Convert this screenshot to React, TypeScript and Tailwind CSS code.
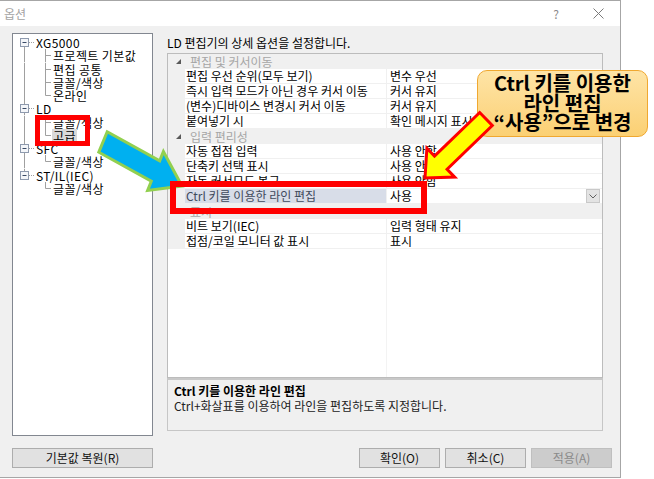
import React from 'react';

type TreeRow = {
  t: string;
  root?: boolean;
  first?: boolean;
  last?: boolean;
  lastChild?: boolean;
  underLast?: boolean;
  sel?: boolean;
};

const treeRows: TreeRow[] = [
  { t: 'XG5000', root: true, first: true },
  { t: '프로젝트 기본값' },
  { t: '편집 공통' },
  { t: '글꼴/색상' },
  { t: '온라인', lastChild: true },
  { t: 'LD', root: true },
  { t: '글꼴/색상' },
  { t: '고급', lastChild: true, sel: true },
  { t: 'SFC', root: true },
  { t: '글꼴/색상', lastChild: true },
  { t: 'ST/IL(IEC)', root: true, last: true },
  { t: '글꼴/색상', lastChild: true, underLast: true },
];

type GridRow = { cat?: boolean; name: string; value?: string; sel?: boolean };

const gridRows: GridRow[] = [
  { cat: true, name: '편집 및 커서이동' },
  { name: '편집 우선 순위(모두 보기)', value: '변수 우선' },
  { name: '즉시 입력 모드가 아닌 경우 커서 이동', value: '커서 유지' },
  { name: '(변수)디바이스 변경시 커서 이동', value: '커서 유지' },
  { name: '붙여넣기 시', value: '확인 메시지 표시' },
  { cat: true, name: '입력 편리성' },
  { name: '자동 접점 입력', value: '사용 안함' },
  { name: '단축키 선택 표시', value: '사용 안함' },
  { name: '자동 커서모드 복구', value: '사용 안함' },
  { name: 'Ctrl 키를 이용한 라인 편집', value: '사용', sel: true },
  { cat: true, name: '표시' },
  { name: '비트 보기(IEC)', value: '입력 형태 유지' },
  { name: '접점/코일 모니터 값 표시', value: '표시' },
];

const LINE = '#a0a0a0';

function TreeLines({ row }: { row: TreeRow }) {
  if (row.root) {
    return (
      <svg width="40" height="13.25" viewBox="0 0 40 13.25" className="shrink-0">
        {!row.first && <line x1="11.5" y1="0" x2="11.5" y2="2" stroke={LINE} />}
        {!row.last && <line x1="11.5" y1="11" x2="11.5" y2="13.25" stroke={LINE} />}
        <rect x="7.5" y="2.5" width="8" height="8" fill="#f4f6f9" stroke="#8e9aae" />
        <line x1="9.5" y1="6.5" x2="13.5" y2="6.5" stroke="#3a4a66" />
        <line x1="16" y1="6.5" x2="21" y2="6.5" stroke={LINE} strokeDasharray="1 1" />
      </svg>
    );
  }
  return (
    <svg width="40" height="13.25" viewBox="0 0 40 13.25" className="shrink-0">
      {!row.underLast && <line x1="11.5" y1="0" x2="11.5" y2="13.25" stroke={LINE} />}
      <line x1="32.5" y1="0" x2="32.5" y2={row.lastChild ? 6.5 : 13.25} stroke={LINE} />
      <line x1="32.5" y1="6.5" x2="38" y2="6.5" stroke={LINE} />
    </svg>
  );
}

function Btn({ label, w, disabled }: { label: string; w: string; disabled?: boolean }) {
  return (
    <div
      className={`${w} h-[20px] flex items-center justify-center text-[12px] leading-none border ${
        disabled ? 'bg-[#cccccc] border-[#bfbfbf] text-[#8a8a8a]' : 'bg-[#e1e1e1] border-[#adadad] text-[#111]'
      }`}
    >
      {label}
    </div>
  );
}

export default function App() {
  return (
    <div className="relative w-[654px] h-[479px] bg-white overflow-hidden font-['Noto_Sans_CJK_KR','Noto_Sans',sans-serif] text-[12px] text-black">
      <div className="w-[621px] h-[478px] border-t border-r border-b border-[#a6a6a6] flex flex-col">
        {/* title bar */}
        <div className="h-[25px] bg-white flex items-center pl-[4px] pr-[16px] shrink-0">
          <span className="text-[12px] text-[#a3a3a3] leading-none">옵션</span>
          <span className="ml-auto mr-[34px] text-[12px] text-[#8a8a8a] leading-none">?</span>
          <svg width="11" height="11" viewBox="0 0 11 11">
            <path d="M0.5 0.5 L10.5 10.5 M10.5 0.5 L0.5 10.5" stroke="#7a7a7a" strokeWidth="1" />
          </svg>
        </div>

        {/* body */}
        <div className="flex-1 bg-[#f0f0f0] flex flex-col">
          <div className="flex pt-[7px] pl-[12px] gap-[14px]">
            {/* tree */}
            <div className="w-[141px] h-[403px] bg-white border border-[#828790] pt-[2px] shrink-0">
              {treeRows.map((r, i) => (
                <div key={i} className="h-[13.25px] flex items-center">
                  <TreeLines row={r} />
                  <span
                    className={`leading-[13px] whitespace-nowrap tracking-[0.4px] ${r.root ? '-ml-[17px]' : ''} ${
                      r.sel ? 'bg-[#d9d9d9] px-[1px] -ml-[1px]' : ''
                    }`}
                  >
                    {r.t}
                  </span>
                </div>
              ))}
            </div>

            {/* right column */}
            <div className="w-[436px] flex flex-col">
              <div className="h-[20px] flex items-center leading-none">LD 편집기의 상세 옵션을 설정합니다.</div>
              <div className="h-[325px] bg-white border border-[#bcbcbc] flex flex-col">
                {gridRows.map((r, i) =>
                  r.cat ? (
                    <div key={i} className="h-[15px] bg-[#f0f0f0] flex items-center shrink-0">
                      <svg width="5" height="5" viewBox="0 0 5 5" className="ml-[8px] mr-[9px]">
                        <path d="M5 0 L5 5 L0 5 Z" fill="#595959" />
                      </svg>
                      <span className="text-[#a6a6a6] leading-none">{r.name}</span>
                    </div>
                  ) : (
                    <div key={i} className="h-[15px] flex shrink-0">
                      <div className="w-[17px] bg-[#f0f0f0]" />
                      <div
                        className={`w-[201px] border-b border-[#f0f0f0] pl-[1px] flex items-center leading-none whitespace-nowrap ${
                          r.sel ? 'bg-[#d8dde8] text-[#3f4a5c]' : ''
                        }`}
                      >
                        {r.name}
                      </div>
                      <div className="w-px bg-[#f0f0f0]" />
                      <div className="flex-1 border-b border-[#f0f0f0] pl-[3px] flex items-center leading-none whitespace-nowrap">
                        {r.value}
                        {r.sel && (
                          <div className="ml-auto mr-[2px] w-[14px] h-[14px] bg-[#e3e3e3] border border-[#c9c9c9] flex items-center justify-center">
                            <svg width="8" height="5" viewBox="0 0 8 5">
                              <path d="M0.5 0.5 L4 4 L7.5 0.5" stroke="#606060" fill="none" />
                            </svg>
                          </div>
                        )}
                      </div>
                    </div>
                  )
                )}
                <div className="flex-1 flex">
                  <div className="w-[218px]" />
                  <div className="w-px bg-[#f3f3f3]" />
                </div>
              </div>
              <div className="h-[53px] border-t-2 border-x border-b border-t-[#c8c8c8] border-x-[#c6c6c6] border-b-[#c6c6c6] pl-[6px] pt-[3px]">
                <div className="font-bold leading-[15px]">Ctrl 키를 이용한 라인 편집</div>
                <div className="leading-[15px] text-[#222]">Ctrl+화살표를 이용하여 라인을 편집하도록 지정합니다.</div>
              </div>
            </div>
          </div>

          {/* buttons */}
          <div className="flex items-center pl-[12px] mt-[12px]">
            <Btn label="기본값 복원(R)" w="w-[141px]" />
            <div className="ml-[206px] flex gap-[5px]">
              <Btn label="확인(O)" w="w-[81px]" />
              <Btn label="취소(C)" w="w-[81px]" />
              <Btn label="적용(A)" w="w-[81px]" disabled />
            </div>
          </div>
        </div>
      </div>

      {/* annotation: callout */}
      <div className="absolute left-[477px] top-[70px] w-[171px] h-[67px] rounded-[10px] border border-[#f0a830] bg-gradient-to-b from-[#fee4a6] to-[#fbd073] pt-[2px] text-center font-bold text-[20px] leading-[19.5px] text-black">
        <div>Ctrl 키를 이용한</div>
        <div>라인 편집</div>
        <div>“사용”으로 변경</div>
      </div>

      {/* annotation: arrows */}
      <svg className="absolute left-0 top-0 pointer-events-none" width="654" height="479" viewBox="0 0 654 479">
        <polygon
          points="107.2,131.8 159.7,160.8 163.4,151.6 182,186 147.6,190.4 151.3,181.2 98.8,152.2"
          fill="#00b0f0"
          stroke="#92d050"
          strokeWidth="3"
          strokeLinejoin="miter"
        />
        <polygon
          points="479.7,112.5 434.5,156.2 426.9,148.3 425,178 454.7,177.1 447.1,169.2 492.3,125.5"
          fill="#ffff00"
          stroke="#ff0000"
          strokeWidth="3"
          strokeLinejoin="miter"
        />
      </svg>

      {/* annotation: red boxes */}
      <div className="absolute left-[35px] top-[115px] w-[55px] h-[31px] border-[5px] border-[#ff0000]" />
      <div className="absolute left-[170px] top-[181px] w-[257px] h-[33px] border-[6px] border-[#ff0000]" />
    </div>
  );
}
